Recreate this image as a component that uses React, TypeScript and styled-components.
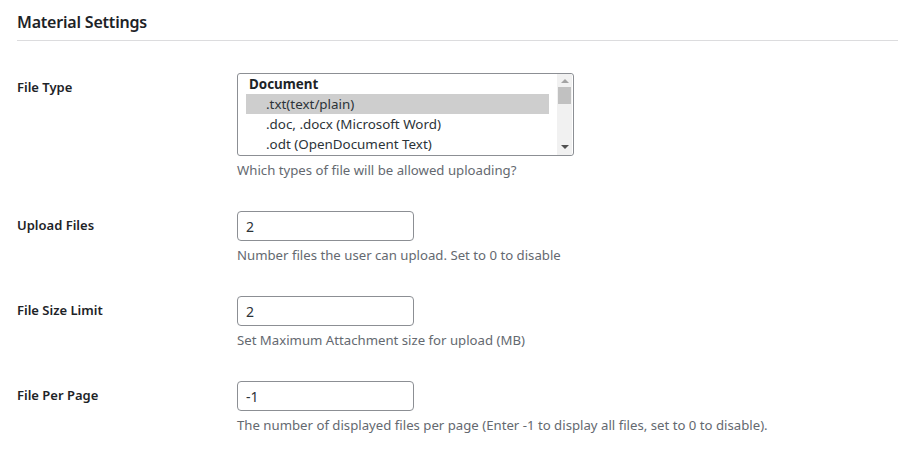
import React from "react";
import styled, { createGlobalStyle } from "styled-components";

const GlobalStyle = createGlobalStyle`
  html, body {
    margin: 0;
    padding: 0;
    background: #ffffff;
  }
  body {
    font-family: "Noto Sans", "Open Sans", sans-serif;
    color: #1d2327;
    font-size: 13px;
  }
`;

type Option = { label: string; selected?: boolean };

const fileTypes: Option[] = [
  { label: ".txt(text/plain)", selected: true },
  { label: ".doc, .docx (Microsoft Word)" },
  { label: ".odt (OpenDocument Text)" },
];

export default function App() {
  return (
    <>
      <GlobalStyle />
      <Page>
        <Heading>Material Settings</Heading>
        <Divider />
        <Table>
          <Row>
            <Label>File Type</Label>
            <Field>
              <ListBox>
                <ListItems>
                  <Group>Document</Group>
                  {fileTypes.map((o) => (
                    <Item key={o.label} $selected={o.selected}>
                      {o.label}
                    </Item>
                  ))}
                </ListItems>
                <ScrollTrack>
                  <Arrow $up />
                  <Thumb />
                  <Spacer />
                  <Arrow />
                </ScrollTrack>
              </ListBox>
              <Hint>Which types of file will be allowed uploading?</Hint>
            </Field>
          </Row>
          <Row>
            <Label>Upload Files</Label>
            <Field>
              <TextInput defaultValue="2" />
              <Hint>Number files the user can upload. Set to 0 to disable</Hint>
            </Field>
          </Row>
          <Row>
            <Label>File Size Limit</Label>
            <Field>
              <TextInput defaultValue="2" />
              <Hint>Set Maximum Attachment size for upload (MB)</Hint>
            </Field>
          </Row>
          <Row>
            <Label>File Per Page</Label>
            <Field>
              <TextInput defaultValue="-1" />
              <Hint>
                The number of displayed files per page (Enter -1 to display all
                files, set to 0 to disable).
              </Hint>
            </Field>
          </Row>
        </Table>
      </Page>
    </>
  );
}

const Page = styled.div`
  padding: 0 1px 0 17px;
`;

const Heading = styled.h2`
  margin: 0;
  padding-top: 11px;
  height: 29px;
  font-size: 16px;
  font-weight: 600;
  letter-spacing: -0.2px;
  line-height: 23px;
  color: #1d2327;
`;

const Divider = styled.div`
  height: 1px;
  background: #dcdcde;
  margin-bottom: 17px;
`;

const Table = styled.div`
  display: flex;
  flex-direction: column;
`;

const Row = styled.div`
  display: flex;
  align-items: flex-start;
`;

const Label = styled.div`
  width: 200px;
  padding: 21px 10px 20px 0;
  font-size: 13px;
  font-weight: 600;
  line-height: 17px;
  color: #1d2327;
`;

const Field = styled.div`
  padding: 15px 10px;
  display: flex;
  flex-direction: column;
  align-items: flex-start;
`;

const ListBox = styled.div`
  box-sizing: border-box;
  width: 337px;
  height: 83px;
  border: 1px solid #8c8f94;
  border-radius: 3px;
  display: flex;
  overflow: hidden;
  background: #fff;
`;

const ListItems = styled.div`
  flex: 1;
  padding: 0 8px;
  font-size: 13.4px;
  color: #2c3338;
`;

const Group = styled.div`
  height: 20px;
  line-height: 21px;
  padding-left: 3px;
  font-weight: 700;
  color: #1d2327;
`;

const Item = styled.div<{ $selected?: boolean }>`
  height: 20px;
  line-height: 20px;
  padding-left: 20px;
  background: ${(p) => (p.$selected ? "#cecece" : "transparent")};
  white-space: nowrap;
`;

const ScrollTrack = styled.div`
  width: 15px;
  margin-right: 1px;
  background: #f1f1f1;
  display: flex;
  flex-direction: column;
  align-items: center;
`;

const Arrow = styled.div<{ $up?: boolean }>`
  width: 0;
  height: 0;
  margin: ${(p) => (p.$up ? "5px 0 4px" : "4px 0 6px")};
  border-left: 4px solid transparent;
  border-right: 4px solid transparent;
  ${(p) =>
    p.$up
      ? "border-bottom: 4px solid #a3a3a3;"
      : "border-top: 4px solid #505050;"}
`;

const Thumb = styled.div`
  width: 13px;
  height: 17px;
  background: #c1c1c1;
`;

const Spacer = styled.div`
  flex: 1;
`;

const TextInput = styled.input`
  box-sizing: border-box;
  width: 177px;
  height: 30px;
  padding: 0 8px;
  border: 1px solid #8c8f94;
  border-radius: 4px;
  font-family: inherit;
  font-size: 14px;
  color: #2c3338;
  outline: none;
`;

const Hint = styled.p`
  margin: 4px 0 0;
  font-size: 13.2px;
  line-height: 21px;
  color: #646970;
  white-space: nowrap;
`;
